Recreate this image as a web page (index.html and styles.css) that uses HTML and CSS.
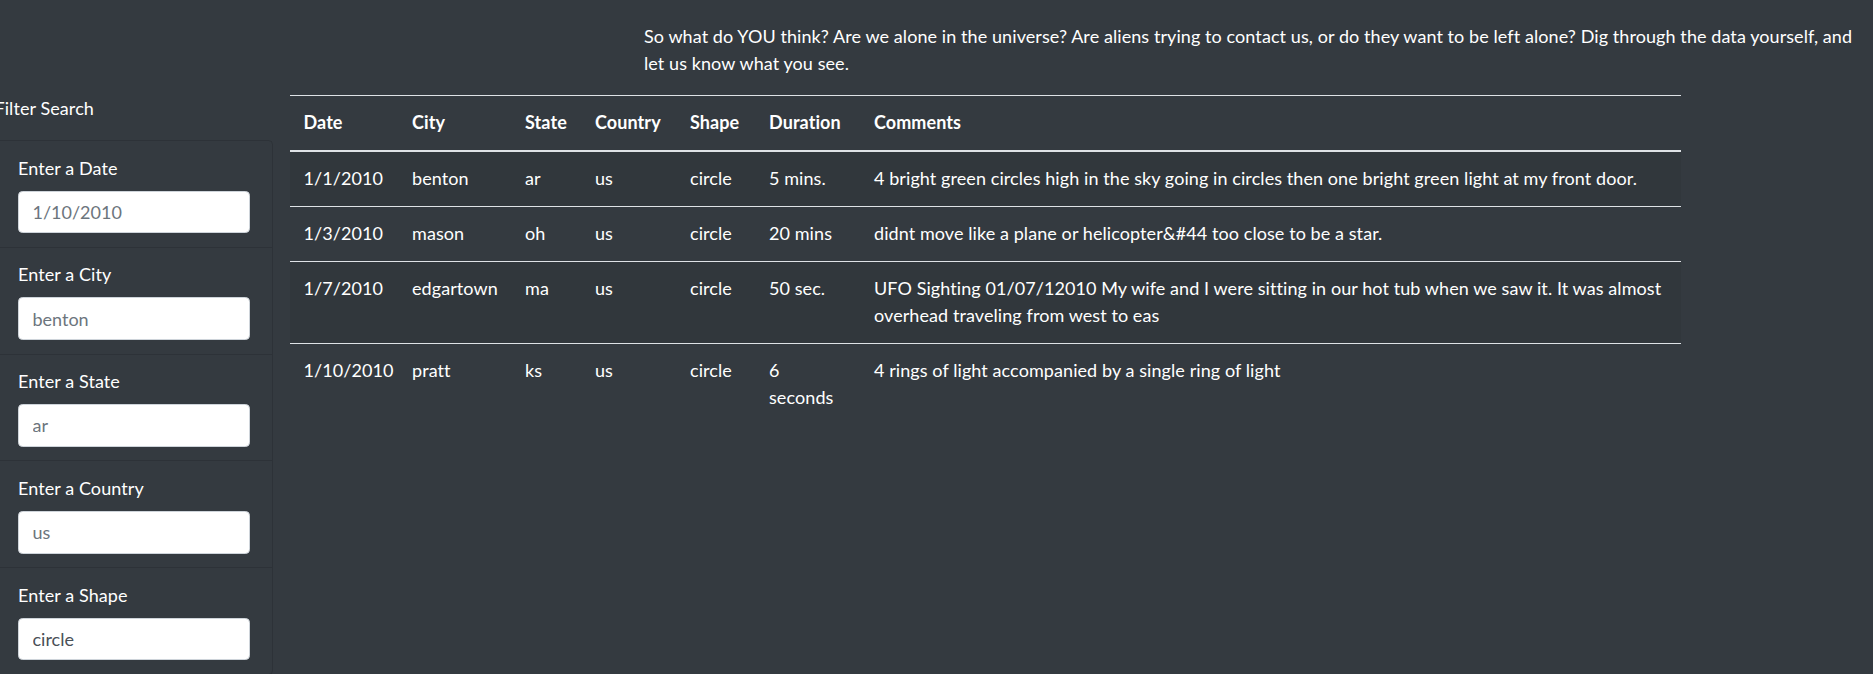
FILE: index.html
```html
<!DOCTYPE html>
<html lang="en">
<head>
<meta charset="utf-8">
<title>UFO Sightings</title>
<link rel="stylesheet" href="styles.css">
</head>
<body>
<div class="page">
  <div class="intro">
    <p>So what do YOU think? Are we alone in the universe? Are aliens trying to contact us, or do they want to be left alone? Dig through the data yourself, and let us know what you see.</p>
  </div>
  <div class="main">
    <aside class="filters">
      <div class="filters-title">Filter Search</div>
      <ul class="filter-list">
        <li class="filter-item"><label for="datetime">Enter a Date</label><input id="datetime" type="text" placeholder="1/10/2010"></li>
        <li class="filter-item"><label for="city">Enter a City</label><input id="city" type="text" placeholder="benton"></li>
        <li class="filter-item"><label for="state">Enter a State</label><input id="state" type="text" placeholder="ar"></li>
        <li class="filter-item"><label for="country">Enter a Country</label><input id="country" type="text" placeholder="us"></li>
        <li class="filter-item"><label for="shape">Enter a Shape</label><input id="shape" type="text" value="circle"></li>
      </ul>
    </aside>
    <div class="table-area">
      <table class="sightings">
        <colgroup>
          <col class="c-date"><col class="c-city"><col class="c-state"><col class="c-country"><col class="c-shape"><col class="c-duration"><col class="c-comments">
        </colgroup>
        <thead>
          <tr><th>Date</th><th>City</th><th>State</th><th>Country</th><th>Shape</th><th>Duration</th><th>Comments</th></tr>
        </thead>
        <tbody>
          <tr><td>1/1/2010</td><td>benton</td><td>ar</td><td>us</td><td>circle</td><td>5 mins.</td><td>4 bright green circles high in the sky going in circles then one bright green light at my front door.</td></tr>
          <tr><td>1/3/2010</td><td>mason</td><td>oh</td><td>us</td><td>circle</td><td>20 mins</td><td>didnt move like a plane or helicopter&amp;#44 too close to be a star.</td></tr>
          <tr><td>1/7/2010</td><td>edgartown</td><td>ma</td><td>us</td><td>circle</td><td>50 sec.</td><td>UFO Sighting 01/07/12010 My wife and I were sitting in our hot tub when we saw it. It was almost overhead traveling from west to eas</td></tr>
          <tr><td>1/10/2010</td><td>pratt</td><td>ks</td><td>us</td><td>circle</td><td>6 seconds</td><td>4 rings of light accompanied by a single ring of light</td></tr>
        </tbody>
      </table>
    </div>
  </div>
</div>
</body>
</html>
```
FILE: styles.css
```css
html, body {
  margin: 0;
  padding: 0;
}

body {
  background: #343a40;
  color: #fff;
  font-family: Lato, "Segoe UI", "Noto Sans", sans-serif;
  font-size: 18px;
  line-height: 27px;
  letter-spacing: 0.08px;
}

.page {
  height: 100vh;
  overflow: hidden;
}

.intro {
  padding: 23px 17px 0 644px;
}

.intro p {
  margin: 0 0 17.5px;
}

.main {
  display: flex;
  align-items: flex-start;
  gap: 17px;
  margin-left: -5.5px;
}

.filters {
  flex: none;
  width: 278.5px;
}

.filters-title {
  margin-bottom: 18.5px;
}

.filter-list {
  list-style: none;
  margin: 0;
  padding: 0;
  border: 1px solid rgba(0, 0, 0, 0.125);
  border-radius: 4.5px;
}

.filter-item {
  padding: 13.5px 22.5px;
  border-top: 1px solid rgba(0, 0, 0, 0.125);
}

.filter-item:first-child {
  border-top: none;
}

.filter-item label {
  display: block;
  margin-bottom: 9px;
}

.filter-item input {
  display: block;
  box-sizing: border-box;
  width: 100%;
  height: 42.75px;
  padding: 6.75px 13.5px;
  font: inherit;
  color: #495057;
  background: #fff;
  border: 1px solid #ced4da;
  border-radius: 4.5px;
  outline: none;
}

.filter-item input::placeholder {
  color: #6c757d;
  opacity: 1;
}

.table-area {
  flex: none;
  width: 1391px;
}

.sightings {
  width: 100%;
  table-layout: fixed;
  border-collapse: collapse;
  color: #fff;
}

.c-date { width: 108.5px; }
.c-city { width: 113px; }
.c-state { width: 70px; }
.c-country { width: 95px; }
.c-shape { width: 79px; }
.c-duration { width: 105px; }

.sightings th,
.sightings td {
  padding: 13.5px;
  text-align: left;
  vertical-align: top;
  border-top: 1px solid #dee2e6;
}

.sightings thead th {
  font-weight: 700;
  vertical-align: bottom;
  border-bottom: 2px solid #dee2e6;
}

.sightings tbody tr:nth-child(odd) {
  background: rgba(0, 0, 0, 0.05);
}
```
